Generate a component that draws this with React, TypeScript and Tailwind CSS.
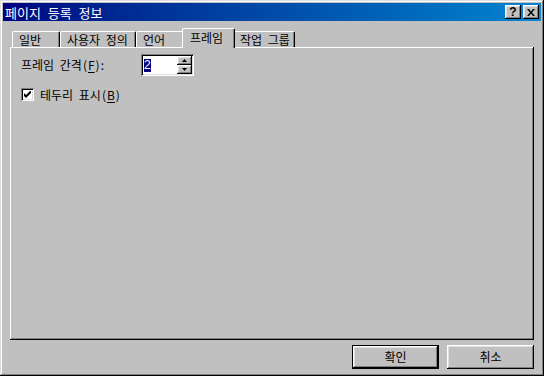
/*
 * 페이지 등록 정보 — Win9x property sheet, "프레임" tab
 */

const raised =
  "shadow-[inset_-1px_-1px_#000,inset_1px_1px_#fff,inset_-2px_-2px_#808080,inset_2px_2px_#dfdfdf]";
const sunken =
  "shadow-[inset_1px_1px_#808080,inset_-1px_-1px_#fff,inset_2px_2px_#000,inset_-2px_-2px_#dfdfdf]";

const tabs = [
  { label: "일반", width: "w-[48px]" },
  { label: "사용자 정의", width: "w-[76px]" },
  { label: "언어", width: "w-[48px]" },
  { label: "프레임", width: "w-[53px]", active: true },
  { label: "작업 그룹", width: "w-[62px]" },
];

function TitleButton({ children }: { children: React.ReactNode }) {
  return (
    <div className={`w-[16px] h-[14px] bg-[#c0c0c0] flex items-center justify-center ${raised}`}>
      {children}
    </div>
  );
}

function Mnemonic({ k }: { k: string }) {
  return (
    <>
      <span className="mx-[1px]">(</span>
      <span className="underline underline-offset-2">{k}</span>
      <span className="mx-[1px]">)</span>
    </>
  );
}

export default function App() {
  return (
    <div
      className="w-[544px] h-[376px] bg-[#c0c0c0] p-[3px] flex flex-col text-[12px] [word-spacing:3px] text-black shadow-[inset_-1px_-1px_#000,inset_1px_1px_#dfdfdf,inset_-2px_-2px_#808080,inset_2px_2px_#fff]"
      style={{ fontFamily: '"Noto Sans CJK KR", "Liberation Sans", sans-serif' }}
    >
      {/* ── TITLE BAR ── */}
      <div className="h-[18px] flex items-center justify-between pl-[2px] pr-[2px] bg-gradient-to-r from-[#000080] to-[#1084d0]">
        <span className="text-white text-[13px] leading-none [word-spacing:4px]">페이지 등록 정보</span>
        <div className="flex gap-[2px]">
          <TitleButton>
            <span className="font-bold text-[12px] leading-none" style={{ fontFamily: '"Liberation Sans", sans-serif' }}>
              ?
            </span>
          </TitleButton>
          <TitleButton>
            <svg width="8" height="7" viewBox="0 0 8 7">
              <path d="M0 0h2l2 2.5L6 0h2L5 3.5 8 7H6L4 4.5 2 7H0l3-3.5z" fill="#000" />
            </svg>
          </TitleButton>
        </div>
      </div>

      {/* ── TABS ── */}
      <div className="flex items-end h-[19px] mt-[7px] pl-[9px]">
        {tabs.map((t) =>
          t.active ? (
            <div
              key={t.label}
              className={`${t.width} h-[20px] -mb-[1px] -mx-[2px] relative z-10 bg-[#c0c0c0] border-l border-t border-white border-r border-r-black rounded-t-[2px] shadow-[inset_-1px_0_#808080] pl-[7px] pt-[1px] leading-[16px]`}
            >
              {t.label}
            </div>
          ) : (
            <div
              key={t.label}
              className={`${t.width} h-[16px] bg-[#c0c0c0] border-l border-t border-white border-r border-r-black rounded-t-[2px] shadow-[inset_-1px_0_#808080] pl-[6px] leading-[15px] whitespace-nowrap`}
            >
              {t.label}
            </div>
          )
        )}
      </div>

      {/* ── PANEL ── */}
      <div className="flex-1 mx-[7px] pl-[11px] pt-[7px] shadow-[inset_-1px_-1px_#000,inset_1px_1px_#fff,inset_-2px_-2px_#808080]">
        <div className="flex items-center h-[22px]">
          <span className="w-[120px]">
            프레임 간격<Mnemonic k="F" />:
          </span>
          <div className={`w-[53px] h-[22px] bg-white flex items-center pl-[2px] pr-[2px] ${sunken}`}>
            <div className="flex-1 flex items-center">
              <span className="bg-[#000080] text-white w-[7px] h-[13px] leading-[13px] ml-[1px] text-[12px]" style={{ fontFamily: '"Liberation Sans", sans-serif' }}>
                2
              </span>
            </div>
            <div className="flex flex-col">
              <div className={`w-[15px] h-[9px] bg-[#c0c0c0] flex items-center justify-center ${raised}`}>
                <svg width="5" height="3" viewBox="0 0 5 3">
                  <path d="M2.5 0L5 3H0z" fill="#000" />
                </svg>
              </div>
              <div className={`w-[15px] h-[9px] bg-[#c0c0c0] flex items-center justify-center ${raised}`}>
                <svg width="5" height="3" viewBox="0 0 5 3">
                  <path d="M0 0h5L2.5 3z" fill="#000" />
                </svg>
              </div>
            </div>
          </div>
        </div>

        <div className="flex items-center mt-[12px] h-[13px]">
          <div className={`w-[13px] h-[13px] bg-white flex items-center justify-center ${sunken}`}>
            <svg width="7" height="7" viewBox="0 0 7 7">
              <path d="M0 2v3l2 2 5-5V-1L2 4z" fill="#000" />
            </svg>
          </div>
          <span className="ml-[6px]">
            테두리 표시<Mnemonic k="B" />
          </span>
        </div>
      </div>

      {/* ── BUTTONS ── */}
      <div className="flex justify-end gap-[8px] mt-[5px] mb-[4px] pr-[7px]">
        <button className="w-[87px] h-[24px] bg-[#c0c0c0] border border-black">
          <div className={`w-full h-full flex items-center justify-center ${raised}`}>확인</div>
        </button>
        <button className={`w-[87px] h-[24px] bg-[#c0c0c0] flex items-center justify-center ${raised}`}>
          취소
        </button>
      </div>
    </div>
  );
}
